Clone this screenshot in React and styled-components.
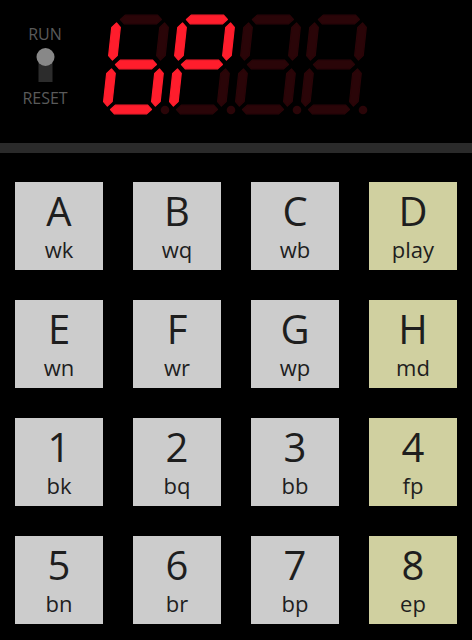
import React from "react";
import styled, { createGlobalStyle } from "styled-components";

const GlobalStyle = createGlobalStyle`
    html, body {
        margin: 0;
        padding: 0;
        background-color: #000;
    }
    body {
        font-family: "Open Sans", "Noto Sans", sans-serif;
    }
`;

const Page = styled.div`
    width: 472px;
    height: 640px;
    background-color: #000;
    overflow: hidden;
`;

const Header = styled.div`
    display: flex;
    align-items: flex-start;
    height: 143px;
`;

const SwitchBlock = styled.div`
    display: flex;
    flex-direction: column;
    align-items: center;
    width: 50px;
    margin-left: 20px;
    padding-top: 26px;
`;

const SwitchLabel = styled.div`
    font-size: 16px;
    line-height: 16px;
    color: #5a5a5a;
    margin-top: ${(props) => props.$gap || 0}px;
`;

const Toggle = styled.svg`
    display: block;
    margin-top: 6px;
`;

const Display = styled.svg`
    display: block;
    margin-left: 30px;
`;

const Divider = styled.div`
    height: 10px;
    background-color: #2a2a2a;
`;

const Keypad = styled.div`
    display: grid;
    grid-template-columns: repeat(4, 88px);
    grid-auto-rows: 88px;
    column-gap: 30px;
    row-gap: 30px;
    padding: 29px 15px 0;
`;

const Key = styled.div`
    display: flex;
    flex-direction: column;
    align-items: center;
    padding-top: 9px;
    box-sizing: border-box;
    background-color: ${(props) => (props.$action ? "#d0d0a0" : "#cccccc")};
    color: #1e1e1e;
`;

const KeyMain = styled.div`
    font-size: 40px;
    line-height: 40px;
`;

const KeySub = styled.div`
    font-size: 22px;
    line-height: 22px;
    margin-top: 7px;
`;

const ON = "#ff1d2c";
const OFF = "#2a0508";

// segment endpoints in the unslanted digit frame (57 x 99)
const SEGMENTS = {
    a: [8, 4.5, 49, 4.5],
    b: [52.5, 8, 52.5, 45],
    c: [52.5, 54, 52.5, 91],
    d: [8, 94.5, 49, 94.5],
    e: [4.5, 54, 4.5, 91],
    f: [4.5, 8, 4.5, 45],
    g: [8, 49.5, 49, 49.5],
};

const segmentPoints = ([x1, y1, x2, y2]) => {
    const h = 4.3;
    if (y1 === y2) {
        return [
            [x1, y1],
            [x1 + h, y1 - h],
            [x2 - h, y1 - h],
            [x2, y1],
            [x2 - h, y1 + h],
            [x1 + h, y1 + h],
        ]
            .map((p) => p.join(","))
            .join(" ");
    }
    return [
        [x1, y1],
        [x1 + h, y1 + h],
        [x1 + h, y2 - h],
        [x1, y2],
        [x1 - h, y2 - h],
        [x1 - h, y1 + h],
    ]
        .map((p) => p.join(","))
        .join(" ");
};

const digits = [
    { x: 2, lit: "cdefg" },
    { x: 68, lit: "abefg" },
    { x: 134, lit: "" },
    { x: 200, lit: "" },
];

const Digit = ({ x, lit }) => (
    <g>
        <g transform={`translate(${x + 10.9}, 15) skewX(-6.28)`}>
            {Object.keys(SEGMENTS).map((key) => {
                const color = lit.includes(key) ? ON : OFF;
                return (
                    <polygon
                        key={key}
                        points={segmentPoints(SEGMENTS[key])}
                        fill={color}
                        stroke={color}
                        strokeWidth="1.2"
                        strokeLinejoin="round"
                    />
                );
            })}
        </g>
        <circle cx={x + 63} cy={110} r={4.3} fill={OFF} />
    </g>
);

const keys = [
    { main: "A", sub: "wk" },
    { main: "B", sub: "wq" },
    { main: "C", sub: "wb" },
    { main: "D", sub: "play", action: true },
    { main: "E", sub: "wn" },
    { main: "F", sub: "wr" },
    { main: "G", sub: "wp" },
    { main: "H", sub: "md", action: true },
    { main: "1", sub: "bk" },
    { main: "2", sub: "bq" },
    { main: "3", sub: "bb" },
    { main: "4", sub: "fp", action: true },
    { main: "5", sub: "bn" },
    { main: "6", sub: "br" },
    { main: "7", sub: "bp" },
    { main: "8", sub: "ep", action: true },
];

const App = () => {
    return (
        <Page>
            <GlobalStyle />
            <Header>
                <SwitchBlock>
                    <SwitchLabel>RUN</SwitchLabel>
                    <Toggle width="20" height="34" viewBox="0 0 20 34">
                        <rect x="3.5" y="9" width="14" height="25" fill="#2c2c2c" />
                        <circle cx="10.5" cy="9" r="9" fill="#888888" />
                    </Toggle>
                    <SwitchLabel $gap={8}>RESET</SwitchLabel>
                </SwitchBlock>
                <Display width="280" height="143" viewBox="0 0 280 143">
                    {digits.map((d) => (
                        <Digit key={d.x} x={d.x} lit={d.lit} />
                    ))}
                </Display>
            </Header>
            <Divider />
            <Keypad>
                {keys.map((k) => (
                    <Key key={k.main} $action={k.action}>
                        <KeyMain>{k.main}</KeyMain>
                        <KeySub>{k.sub}</KeySub>
                    </Key>
                ))}
            </Keypad>
        </Page>
    );
};

export default App;
